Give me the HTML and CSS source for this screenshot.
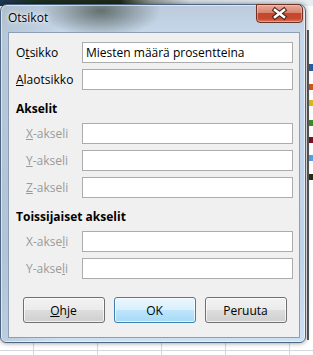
FILE: index.html
```html
<!DOCTYPE html>
<html lang="fi">
<head>
	<meta charset="UTF-8">
	<title>Otsikot</title>
	<link rel="stylesheet" href="styles.css">
</head>
<body>
	<div class="window">
		<div class="titlebar">
			<span class="title">Otsikot</span>
			<div class="close">
				<svg width="47" height="18" viewBox="0 0 47 18">
					<path d="M19 5 L28 12 M28 5 L19 12" stroke="#4a1c14" stroke-width="4.6" stroke-linecap="square" fill="none"/>
					<path d="M19 5 L28 12 M28 5 L19 12" stroke="#fff" stroke-width="2.6" stroke-linecap="square" fill="none"/>
				</svg>
			</div>
		</div>
		<div class="panel">
			<div class="row">
				<label>O<u>t</u>sikko</label>
				<input class="field" type="text" value="Miesten määrä prosentteina">
			</div>
			<div class="row">
				<label><u>A</u>laotsikko</label>
				<input class="field" type="text" value="">
			</div>

			<div class="group">Akselit</div>
			<div class="row sub">
				<label><u>X</u>-akseli</label>
				<input class="field" type="text" value="">
			</div>
			<div class="row sub">
				<label><u>Y</u>-akseli</label>
				<input class="field" type="text" value="">
			</div>
			<div class="row sub">
				<label><u>Z</u>-akseli</label>
				<input class="field" type="text" value="">
			</div>

			<div class="group">Toissijaiset akselit</div>
			<div class="row sub">
				<label>X-akse<u>l</u>i</label>
				<input class="field" type="text" value="">
			</div>
			<div class="row sub">
				<label>Y-akse<u>l</u>i</label>
				<input class="field" type="text" value="">
			</div>

			<div class="buttons">
				<button class="btn"><u>O</u>hje</button>
				<button class="btn default">OK</button>
				<button class="btn">Peruuta</button>
			</div>
		</div>
	</div>
</body>
</html>
```

FILE: styles.css
```css
*{
	margin: 0;
	padding: 0;
	box-sizing: border-box;
}
body{
	width: 313px;
	height: 355px;
	overflow: hidden;
	padding-top: 4px;
	font-family: "Open Sans", "Noto Sans", sans-serif;
	font-size: 12px;
	color: #000;
	background:
		linear-gradient(90deg, #1f3852 0, #1b3022 35px, #1f2a1a 120px, #8e968c 150px, #d6dee7 190px, #e8edf2 100%) 0 0/100% 6px no-repeat,
		linear-gradient(#5a5a5a, #5a5a5a) 307px 30px/2px 310px no-repeat,
		linear-gradient(transparent 64px, #2b5c9c 64px, #2b5c9c 71px, transparent 71px, transparent 84px, #d0561e 84px, #d0561e 90px, transparent 90px, transparent 100px, #d8b81c 100px, #d8b81c 106px, transparent 106px, transparent 120px, #3f8a2a 120px, #3f8a2a 126px, transparent 126px, transparent 137px, #7a1020 137px, #7a1020 143px, transparent 143px, transparent 155px, #5aa0d8 155px, #5aa0d8 161px, transparent 161px, transparent 174px, #2c2c14 174px, #2c2c14 180px, transparent 180px) 309px 0/4px 100% no-repeat,
		linear-gradient(#d4d8de, #d4d8de) 0 350px/100% 1px no-repeat,
		repeating-linear-gradient(90deg, #d4d8de 0, #d4d8de 1px, transparent 1px, transparent 64px) 33px 343px/280px 12px no-repeat,
		#fff;
}

/* dialog window */
.window{
	width: 306px;
	height: 339px;
	border: 1px solid #4d6582;
	border-radius: 7px 7px 6px 6px;
	padding: 0 5px 4px 7px;
	display: flex;
	flex-direction: column;
	background:
		radial-gradient(ellipse 60px 26px at 100px 6px, rgba(38,50,38,.6), rgba(38,50,38,0)),
		linear-gradient(90deg, rgba(150,165,175,.35) 0, rgba(255,255,255,0) 60px),
		linear-gradient(#bccbdc 0, #c6d8eb 30px, #bed4ec 250px, #cde1f5 100%);
	box-shadow: 0 0 5px rgba(0,0,0,.45), inset 0 0 0 1px rgba(255,255,255,.55);
}
.titlebar{
	height: 27px;
	display: flex;
	justify-content: space-between;
	align-items: flex-start;
}
.title{
	padding-top: 5px;
	line-height: 16px;
	font-size: 12px;
	text-shadow: 0 0 6px #fff, 0 0 3px #fff;
}
.close{
	width: 47px;
	height: 19px;
	margin-top: -1px;
	margin-right: -3px;
	border: 1px solid #6e3022;
	border-radius: 0 5px 4px 4px;
	background: linear-gradient(#e9a99a 0, #d98570 45%, #c8462b 50%, #c44a30 80%, #d97a5c 100%);
	box-shadow: inset 0 0 0 1px rgba(255,210,200,.45);
}
.close svg{
	display: block;
	margin-left: -1px;
}

/* content */
.panel{
	flex: 1;
	background: #f0f0f0;
	border: 1px solid #8d9db3;
	padding: 9px 6px 0 7px;
	display: flex;
	flex-direction: column;
}
.row{
	display: flex;
	align-items: center;
	height: 21px;
}
.row + .row{
	margin-top: 6px;
}
.row label{
	width: 66px;
	line-height: 16px;
}
.row.sub{
	padding-left: 10px;
}
.row.sub label{
	width: 56px;
	color: #9a9a9a;
}
.field{
	flex: 1;
	height: 21px;
	border: 1px solid #acacac;
	background: #fff;
	padding: 0 3px;
	font-family: inherit;
	font-size: 12px;
	color: #000;
	outline: none;
}
.group{
	margin-top: 11px;
	margin-bottom: 6px;
	line-height: 16px;
	font-weight: bold;
}
.buttons{
	display: flex;
	justify-content: center;
	gap: 9px;
	margin-top: 18px;
}
.btn{
	width: 82px;
	height: 26px;
	border: 1px solid #707070;
	border-radius: 3px;
	background: linear-gradient(#f2f2f2 0, #ebebeb 50%, #dddddd 50%, #cfcfcf 100%);
	box-shadow: inset 0 0 0 1px rgba(255,255,255,.7);
	font-family: inherit;
	font-size: 12px;
	color: #000;
}
.btn.default{
	border-color: #3c7fb1;
	background: linear-gradient(#eaf6fd 0, #d9f0fc 50%, #bee6fd 50%, #a7d9f5 100%);
}
```
